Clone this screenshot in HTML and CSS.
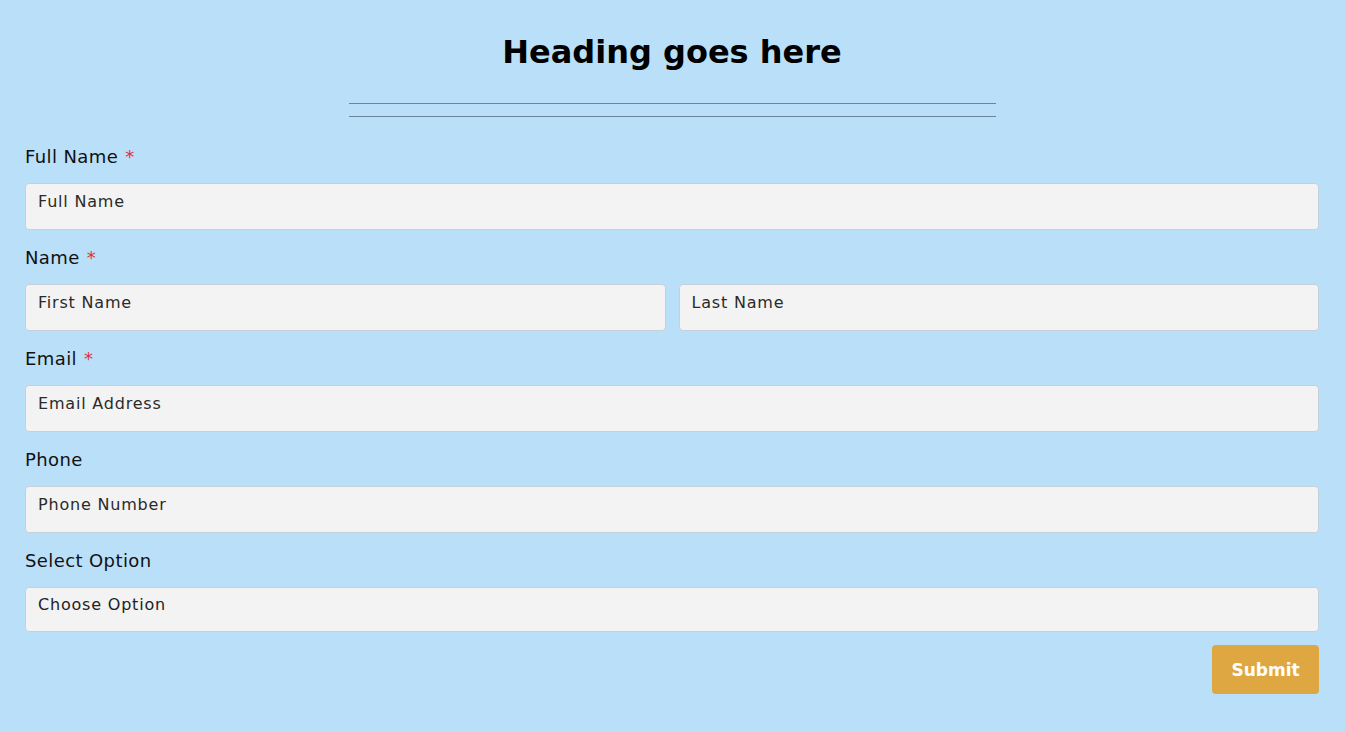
FILE: index.html
```html
<!DOCTYPE html>
<html lang="en">
<head>
<meta charset="utf-8">
<title>Form</title>
<link rel="stylesheet" href="styles.css">
</head>
<body>
<form class="form">
  <h1 class="title">Heading goes here</h1>
  <div class="divider"></div>
  <div class="field">
    <label class="label">Full Name <span class="req">*</span></label>
    <input class="input" type="text" placeholder="Full Name">
  </div>
  <div class="field">
    <label class="label">Name <span class="req">*</span></label>
    <div class="row">
      <input class="input" type="text" placeholder="First Name">
      <input class="input" type="text" placeholder="Last Name">
    </div>
  </div>
  <div class="field">
    <label class="label">Email <span class="req">*</span></label>
    <input class="input" type="email" placeholder="Email Address">
  </div>
  <div class="field">
    <label class="label">Phone</label>
    <input class="input" type="tel" placeholder="Phone Number">
  </div>
  <div class="field">
    <label class="label">Select Option</label>
    <select class="input select"><option>Choose Option</option></select>
  </div>
  <div class="actions">
    <button class="submit" type="button">Submit</button>
  </div>
</form>
</body>
</html>
```
FILE: styles.css
```css
* { box-sizing: border-box; }
html, body { margin: 0; }
body {
  background: #badff9;
  font-family: "DejaVu Sans", "Noto Sans", sans-serif;
  color: #111;
  height: 732px;
}
.form {
  padding: 32px 26px 0 25px;
}
.title {
  margin: 0;
  text-align: center;
  font-size: 32px;
  line-height: 40px;
  font-weight: 700;
  color: #000;
}
.divider {
  width: 647px;
  height: 14px;
  margin: 31px auto 28px;
  border-top: 1px solid #6a8499;
  border-bottom: 1px solid #6a8499;
}
.field { margin-bottom: 16px; }
.label {
  display: block;
  font-size: 18px;
  line-height: 24px;
  letter-spacing: 0.4px;
  margin-bottom: 14px;
  color: #111;
}
.req { color: #e0303c; margin-left: 1px; }
.row {
  display: flex;
  gap: 13px;
}
.input {
  display: block;
  width: 100%;
  height: 47px;
  background: #f3f3f3;
  border: 1px solid #c9cfd9;
  border-radius: 4px;
  padding: 5px 12px 16px;
  font-family: inherit;
  font-size: 16px;
  line-height: 24px;
  letter-spacing: 0.8px;
  color: #222;
  text-align: left;
  outline: none;
}
.input::placeholder { color: #2a2a2a; opacity: 1; }
.row .input { flex: 1; min-width: 0; }
.select {
  appearance: none;
  -webkit-appearance: none;
  height: 45px;
  padding: 5px 12px 14px;
}
.actions {
  display: flex;
  justify-content: flex-end;
  margin-top: -3px;
}
.submit {
  width: 107px;
  height: 49px;
  background: #dfa742;
  border: none;
  border-radius: 4px;
  color: #fff;
  font-family: inherit;
  font-size: 17px;
  font-weight: 700;
}
```
